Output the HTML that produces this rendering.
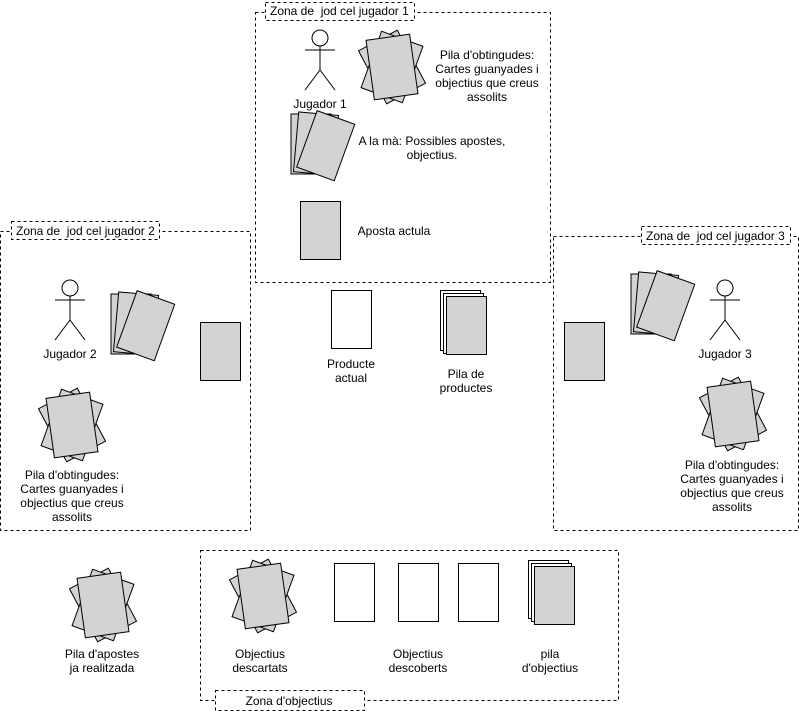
<!DOCTYPE html>
<html><head><meta charset="utf-8"><style>
html,body{margin:0;padding:0;background:#fff;}
svg{display:block;font-family:"Liberation Sans",sans-serif;font-size:12px;}
</style></head><body>
<svg width="799" height="711" viewBox="0 0 799 711" xmlns="http://www.w3.org/2000/svg">
<defs>
<g id="pile" stroke="#000" fill="#d3d3d3">
<rect x="-22" y="-30" width="44" height="60" transform="rotate(-28)"/>
<rect x="-22" y="-30" width="44" height="60" transform="rotate(20)"/>
<rect x="-22" y="-30" width="44" height="60" transform="rotate(-8)"/>
</g>
<g id="hand" stroke="#000" fill="#d3d3d3">
<rect x="-30" y="-30" width="40" height="60"/>
<rect x="-25" y="-30" width="40" height="60" transform="rotate(5)"/>
<rect x="-15" y="-30" width="40" height="60" transform="rotate(20)"/>
</g>
<g id="actor" stroke="#000" fill="none" stroke-width="1">
<circle cx="0" cy="0" r="8" fill="#fff"/>
<line x1="0" y1="8" x2="0" y2="32"/>
<line x1="-15" y1="12" x2="15" y2="12"/>
<line x1="0" y1="32" x2="-15" y2="52"/>
<line x1="0" y1="32" x2="15" y2="52"/>
</g>
</defs>
<g fill="none" stroke="#000" stroke-dasharray="3 3">
<rect x="255.5" y="12.5" width="295" height="270"/>
<rect x="0.5" y="231.5" width="250" height="299"/>
<rect x="553.5" y="236.5" width="245" height="294"/>
<rect x="200.5" y="550.5" width="418" height="150"/>
</g>
<g fill="#fff" stroke="#000" stroke-dasharray="3 3">
<rect x="265.5" y="2.5" width="149" height="18"/>
<rect x="11.5" y="221.5" width="148" height="18"/>
<rect x="641.5" y="226.5" width="149" height="18"/>
<rect x="215.5" y="690.5" width="149" height="20"/>
</g>
<g fill="#000">
<text x="270" y="15">Zona de &#160;jod cel jugador 1</text>
<text x="16" y="235">Zona de &#160;jod cel jugador 2</text>
<text x="646" y="240">Zona de &#160;jod cel jugador 3</text>
<text x="289" y="705" text-anchor="middle">Zona d'objectius</text>
</g>
<use href="#actor" x="320" y="38"/>
<use href="#actor" x="70" y="288"/>
<use href="#actor" x="725" y="288"/>
<use href="#pile" x="392" y="67"/>
<use href="#pile" x="72" y="425"/>
<use href="#pile" x="733" y="414"/>
<use href="#pile" x="103" y="605"/>
<use href="#pile" x="263" y="596"/>
<use href="#hand" x="321" y="144"/>
<use href="#hand" x="141" y="324"/>
<use href="#hand" x="661" y="304"/>
<g stroke="#000" fill="#d3d3d3">
<rect x="300.5" y="201.5" width="40" height="58"/>
<rect x="200.5" y="322.5" width="40" height="58"/>
<rect x="564.5" y="322.5" width="40" height="58"/>
</g>
<g stroke="#000" fill="#fff">
<rect x="331.5" y="290.5" width="40" height="58"/>
<rect x="440.5" y="290.5" width="40" height="60"/>
<rect x="443.5" y="293.5" width="40" height="60"/>
<rect x="446.5" y="296.5" width="40" height="58" fill="#d3d3d3"/>
<rect x="334.5" y="563.5" width="40" height="58"/>
<rect x="398.5" y="563.5" width="40" height="58"/>
<rect x="458.5" y="563.5" width="40" height="58"/>
<rect x="528.5" y="560.5" width="40" height="58"/>
<rect x="531.5" y="563.5" width="40" height="58"/>
<rect x="534.5" y="566.5" width="40" height="58" fill="#d3d3d3"/>
</g>
<g fill="#000" text-anchor="middle">
<text x="320" y="108">Jugador 1</text>
<text x="70" y="358">Jugador 2</text>
<text x="725" y="358">Jugador 3</text>
<text x="487" y="59">Pila d'obtingudes:</text>
<text x="487" y="73">Cartes guanyades i</text>
<text x="487" y="87">objectius que creus</text>
<text x="487" y="101">assolits</text>
<text x="432" y="145">A la mà: Possibles apostes,</text>
<text x="432" y="159">objectius.</text>
<text x="394" y="235">Aposta actula</text>
<text x="72" y="479">Pila d'obtingudes:</text>
<text x="72" y="493">Cartes guanyades i</text>
<text x="72" y="507">objectius que creus</text>
<text x="72" y="521">assolits</text>
<text x="732" y="469">Pila d'obtingudes:</text>
<text x="732" y="483">Cartes guanyades i</text>
<text x="732" y="497">objectius que creus</text>
<text x="732" y="511">assolits</text>
<text x="351" y="368">Producte</text>
<text x="351" y="382">actual</text>
<text x="466" y="378">Pila de</text>
<text x="466" y="392">productes</text>
<text x="102" y="658">Pila d'apostes</text>
<text x="102" y="672">ja realitzada</text>
<text x="260" y="658">Objectius</text>
<text x="260" y="672">descartats</text>
<text x="418" y="658">Objectius</text>
<text x="418" y="672">descoberts</text>
<text x="550" y="658">pila</text>
<text x="550" y="672">d'objectius</text>
</g>
</svg>
</body></html>
